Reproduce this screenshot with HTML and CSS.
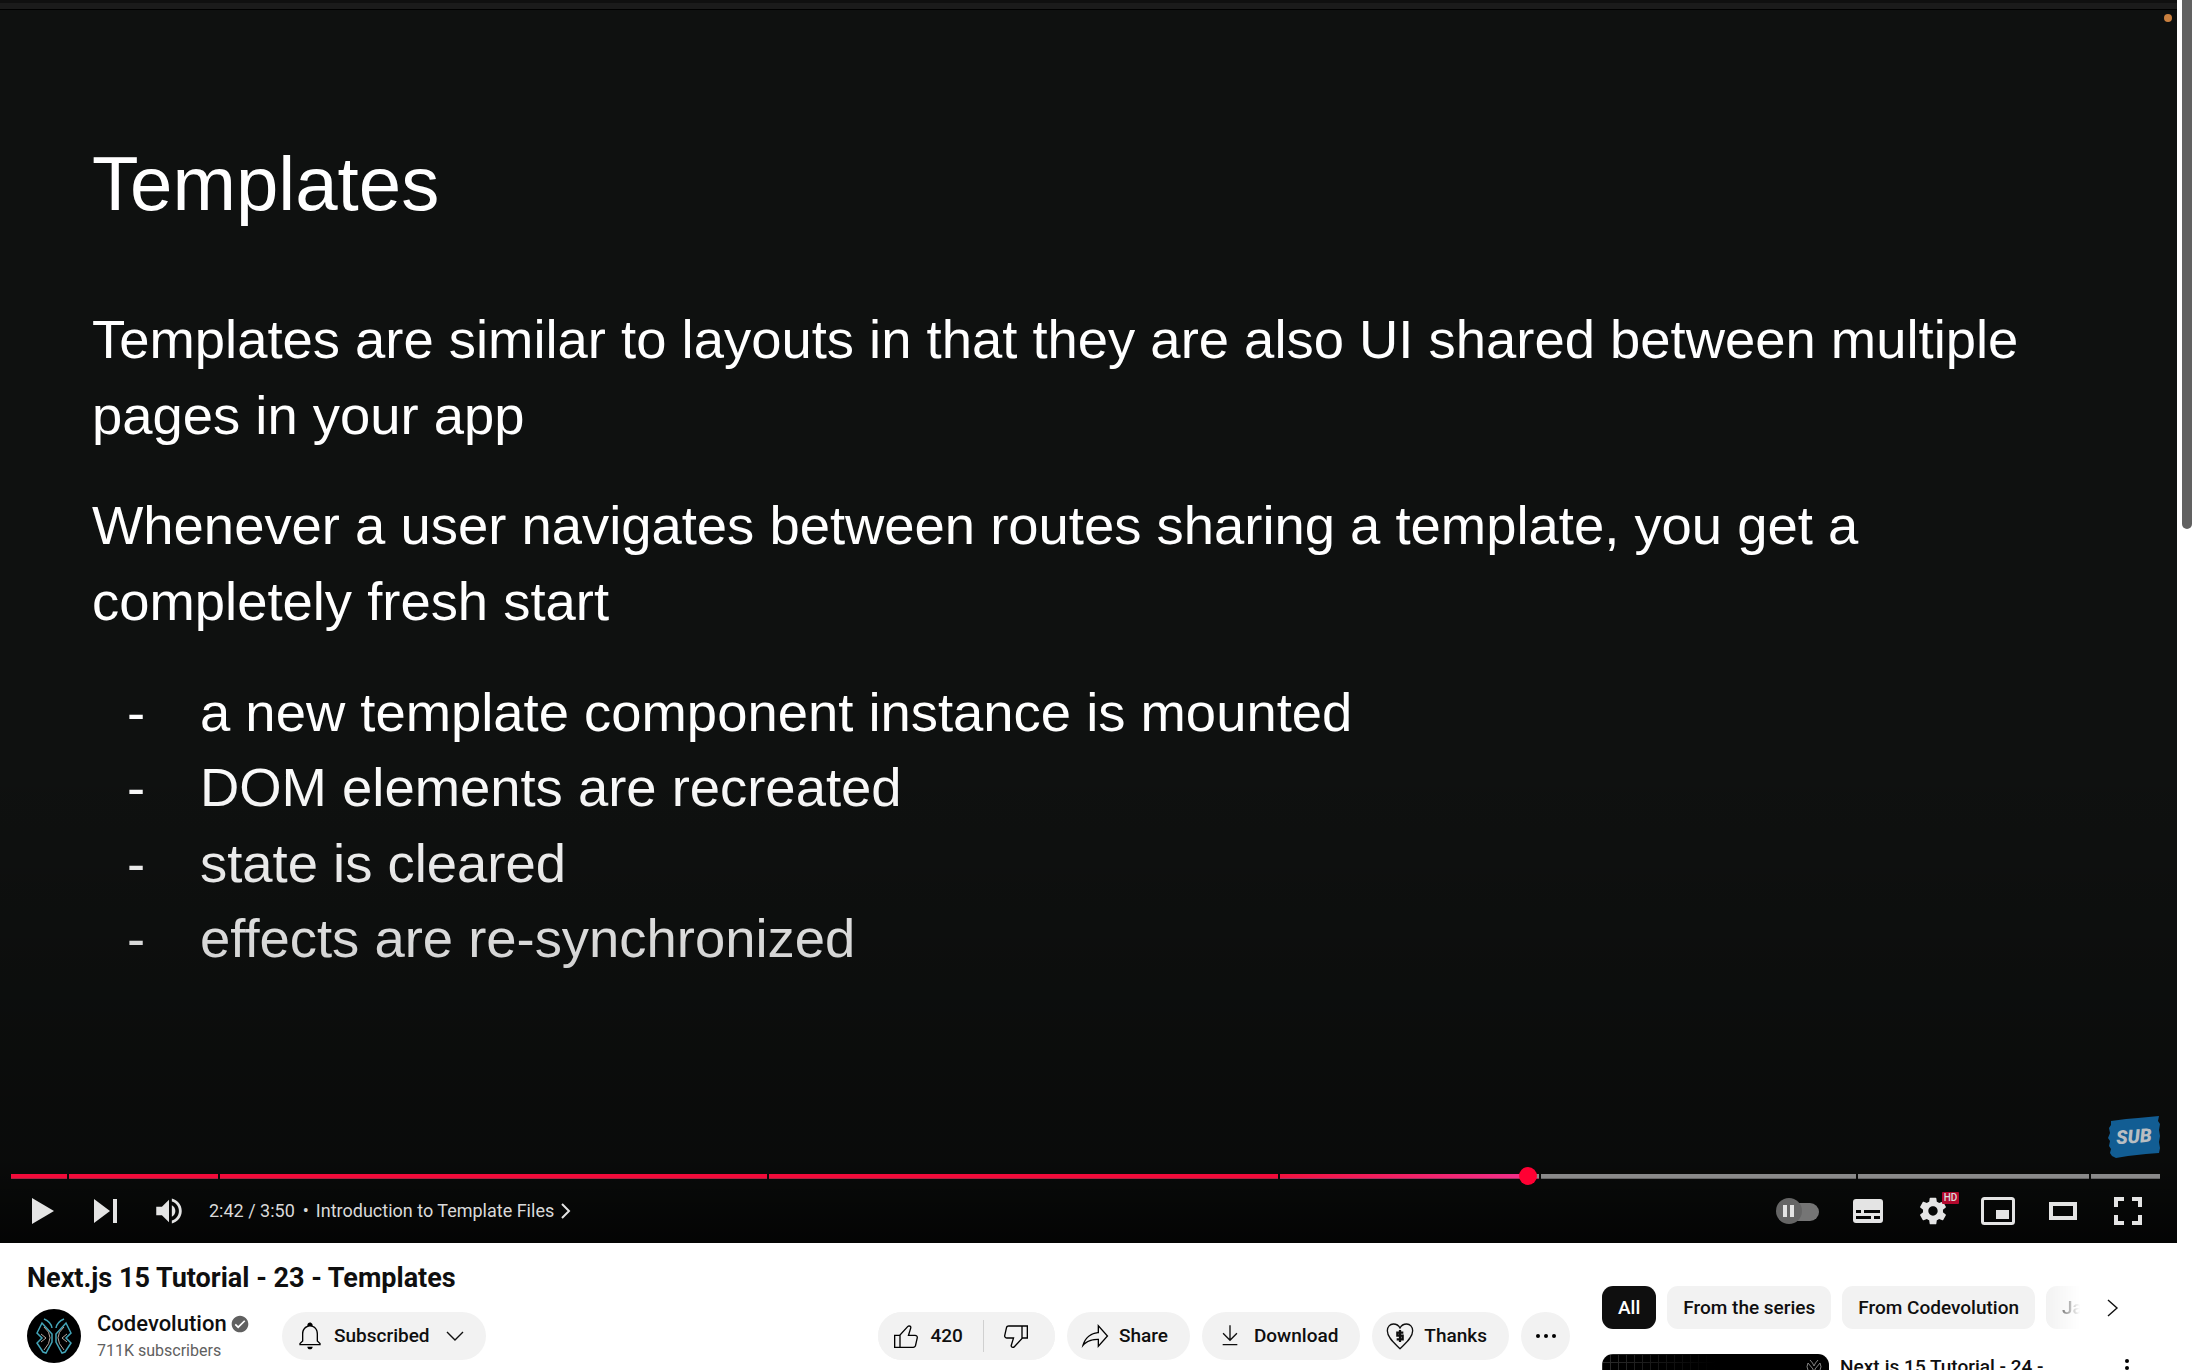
FILE: index.html
```html
<!DOCTYPE html>
<html lang="en">
<head>
<meta charset="utf-8">
<title>Next.js 15 Tutorial - 23 - Templates</title>
<link rel="stylesheet" href="styles.css">
</head>
<body>
<div class="app">
  <main class="page">
    <section class="player" aria-label="Video player">
      <div class="slide">
        <h2 class="slide-title">Templates</h2>
        <p>Templates are similar to layouts in that they are also UI shared between multiple<br>pages in your app</p>
        <p>Whenever a user navigates between routes sharing a template, you get a<br>completely fresh start</p>
        <ul>
          <li>a new template component instance is mounted</li>
          <li>DOM elements are recreated</li>
          <li>state is cleared</li>
          <li>effects are re-synchronized</li>
        </ul>
      </div>
      <span class="rec-dot"></span>
      <div class="shade"></div>
      <div class="controls">
        <button class="sub-badge" type="button">
          <svg viewBox="0 0 52 42" aria-hidden="true"><path d="M3 5 18 3 30 2 51 0 50 5 52 8 51 14 52 20 51 26 52 32 51 37 38 38 20 40 8 42 4 40 2 37 3 33 1 30 2 25 0 22 2 17 1 12 3 9Z" fill="#125d93"/></svg>
          <span>SUB</span>
        </button>
        <div class="timeline">
          <div class="segment played" style="flex-grow:56"></div>
          <div class="segment played" style="flex-grow:149"></div>
          <div class="segment played" style="flex-grow:546"></div>
          <div class="segment played" style="flex-grow:508"></div>
          <div class="segment current" style="flex-grow:259"></div>
          <div class="segment" style="flex-grow:314"></div>
          <div class="segment" style="flex-grow:231"></div>
          <div class="segment" style="flex-grow:69"></div>
          <input class="seek" type="range" min="0" max="2300" value="1628" aria-label="Seek">
        </div>
        <div class="bar">
          <button class="ctl" type="button" aria-label="Play"><svg width="22" height="26" viewBox="0 0 22 26"><path d="M0 0 22 13 0 26Z"/></svg></button>
          <button class="ctl" type="button" aria-label="Next"><svg width="24" height="24" viewBox="0 0 24 24"><path d="M0 0 16 12 0 24ZM19 0h4v24h-4Z"/></svg></button>
          <button class="ctl" type="button" aria-label="Mute"><svg width="34" height="34" viewBox="0 0 24 24"><path d="M3 9v6h4l5 5V4L7 9H3zm13.5 3c0-1.77-1.02-3.29-2.5-4.03v8.05c1.48-.73 2.5-2.25 2.5-4.02zM14 3.23v2.06c2.89.86 5 3.54 5 6.71s-2.11 5.85-5 6.71v2.06c4.01-.91 7-4.49 7-8.77s-2.99-7.86-7-8.77z"/></svg></button>
          <span class="time">2:42 / 3:50</span>
          <button class="chapter" type="button"><span>•</span><span>Introduction to Template Files</span><svg width="10" height="16" viewBox="0 0 10 16"><path d="M1 1 8 8 1 15" fill="none" stroke="#e4e4e4" stroke-width="2"/></svg></button>
          <span class="spacer"></span>
          <button class="ctl autoplay" type="button" aria-label="Autoplay"><svg width="44" height="26" viewBox="0 0 44 26"><rect x="12" y="5" width="31" height="18" rx="9" fill="#757575"/><circle cx="13" cy="13" r="13" fill="#656565"/><path d="M7 7h4v12H7ZM14 7h4v12h-4Z"/></svg></button>
          <button class="ctl wide" type="button" aria-label="Subtitles"><svg width="30" height="24" viewBox="0 0 30 24"><path fill-rule="evenodd" d="M3 0h24a3 3 0 0 1 3 3v18a3 3 0 0 1-3 3H3a3 3 0 0 1-3-3V3a3 3 0 0 1 3-3ZM3 11v3h5v-3ZM11 11v3h16v-3ZM3 17v3h15v-3ZM21 17v3h6v-3Z"/></svg></button>
          <button class="ctl wide settings" type="button" aria-label="Settings"><svg width="32" height="32" viewBox="0 0 24 24"><path d="M19.43 12.98c.04-.32.07-.64.07-.98s-.03-.66-.07-.98l2.11-1.65c.19-.15.24-.42.12-.64l-2-3.46c-.12-.22-.39-.3-.61-.22l-2.49 1c-.52-.4-1.08-.73-1.69-.98l-.38-2.65C14.46 2.18 14.25 2 14 2h-4c-.25 0-.46.18-.49.42l-.38 2.65c-.61.25-1.17.59-1.69.98l-2.49-1c-.23-.09-.49 0-.61.22l-2 3.46c-.13.22-.07.49.12.64l2.11 1.65c-.04.32-.07.65-.07.98s.03.66.07.98l-2.11 1.65c-.19.15-.24.42-.12.64l2 3.46c.12.22.39.3.61.22l2.49-1c.52.4 1.08.73 1.69.98l.38 2.65c.03.24.24.42.49.42h4c.25 0 .46-.18.49-.42l.38-2.65c.61-.25 1.17-.59 1.69-.98l2.49 1c.23.09.49 0 .61-.22l2-3.46c.12-.22.07-.49-.12-.64l-2.11-1.65zM12 15.5c-1.93 0-3.5-1.57-3.5-3.5s1.57-3.5 3.5-3.5 3.5 1.57 3.5 3.5-1.57 3.5-3.5 3.5z"/></svg><span class="hd">HD</span></button>
          <button class="ctl wide" type="button" aria-label="Miniplayer"><svg width="34" height="28" viewBox="0 0 34 28"><rect x="1.5" y="1.5" width="31" height="25" rx="2" fill="none" stroke="#e4e4e4" stroke-width="3"/><path d="M15 13h13v9H15Z"/></svg></button>
          <button class="ctl wide" type="button" aria-label="Theater mode"><svg width="28" height="18" viewBox="0 0 28 18"><path d="M2 2h24v14H2Z" fill="none" stroke="#e4e4e4" stroke-width="4"/></svg></button>
          <button class="ctl wide" type="button" aria-label="Full screen"><svg width="28" height="28" viewBox="0 0 28 28"><path d="M2 10V2h8M18 2h8v8M26 18v8h-8M10 26H2v-8" fill="none" stroke="#e4e4e4" stroke-width="4"/></svg></button>
        </div>
      </div>
    </section>

    <div class="columns">
      <section class="primary">
        <h1>Next.js 15 Tutorial - 23 - Templates</h1>
        <div class="meta">
          <a class="avatar" href="#" aria-label="Codevolution"><svg width="54" height="54" viewBox="0 0 54 54"><circle cx="27" cy="27" r="27" fill="#000"/><g fill="none" stroke="#43a5b8" stroke-width="1.5"><path d="M17 10q7 3 8 9M37 10q-7 3-8 9"/><path d="M15 14 10 24 15 29 10 34 16 43 19 44 25 33 25 25Z"/><path d="M39 14 44 24 39 29 44 34 38 43 35 44 29 33 29 25Z"/></g><path d="M17 18q12 10 0 23M14 25l5 4-5 4M37 18q-12 10 0 23M40 25l-5 4 5 4" fill="none" stroke="#b9a9a0"/></svg></a>
          <div class="owner">
            <a class="name" href="#">Codevolution <svg width="20" height="20" viewBox="0 0 24 24" fill="#606060"><path d="M12,2C6.5,2,2,6.5,2,12c0,5.5,4.5,10,10,10s10-4.5,10-10C22,6.5,17.5,2,12,2z M9.8,17.3l-4.2-4.1L7,11.8l2.8,2.7L17,7.4l1.4,1.4L9.8,17.3z"/></svg></a>
            <span class="subs">711K subscribers</span>
          </div>
          <button class="pill subscribed" type="button"><svg width="32" height="32" viewBox="0 0 24 24"><path d="M10,20h4c0,1.1-0.9,2-2,2S10,21.1,10,20z M20,17.35V19H4v-1.65l2-1.88v-5.15C6,7.4,7.56,5.1,10,4.34v-0.38c0-1.42,1.49-2.5,2.99-1.76C13.65,2.52,14,3.23,14,3.96l0,0.39c2.44,0.75,4,3.06,4,5.98v5.15L20,17.35z M19,17.77l-2-1.88v-5.47c0-2.47-1.19-4.36-3.13-5.1c-1.26-0.53-2.64-0.5-3.84,0.03C8.15,6.11,7,7.99,7,10.42v5.47l-2,1.88V18h14V17.77z"/></svg>Subscribed<svg class="caret" width="18" height="10" viewBox="0 0 18 10"><path d="M1 1 9 9 17 1" fill="none" stroke="#0f0f0f" stroke-width="1.4"/></svg></button>
          <span class="spacer"></span>
          <div class="actions">
            <div class="votes">
              <button class="pill like" type="button"><svg width="32" height="32" viewBox="0 0 24 24"><path d="M18.77,11h-4.23l1.52-4.94C16.38,5.03,15.54,4,14.38,4c-0.58,0-1.14,0.24-1.52,0.65L7,11H3v10h4h1h9.43c1.06,0,1.98-0.67,2.19-1.61l1.34-6C21.23,12.15,20.18,11,18.77,11z M7,20H4v-8h3V20z M19.98,13.17l-1.34,6C18.54,19.65,18.03,20,17.43,20H8v-8.61l5.6-6.06C13.79,5.12,14.08,5,14.38,5c0.26,0,0.5,0.11,0.63,0.3c0.07,0.1,0.15,0.26,0.09,0.47l-1.52,4.94L13.18,12h1.35h4.23c0.41,0,0.8,0.17,1.03,0.46C19.92,12.61,20.05,12.86,19.98,13.17z"/></svg>420</button>
              <button class="pill dislike" type="button" aria-label="Dislike"><svg width="32" height="32" viewBox="0 0 24 24"><path d="M17,4h-1H6.57C5.5,4,4.59,4.67,4.38,5.61l-1.34,6C2.77,12.85,3.82,14,5.23,14h4.23l-1.52,4.94C7.62,19.97,8.46,21,9.62,21c0.58,0,1.14-0.24,1.52-0.65L17,14h4V4H17z M10.4,19.67C10.21,19.88,9.92,20,9.62,20c-0.26,0-0.5-0.11-0.63-0.3c-0.07-0.1-0.15-0.26-0.09-0.47l1.52-4.94l0.4-1.29H9.46H5.23c-0.41,0-0.8-0.17-1.03-0.46c-0.12-0.15-0.25-0.4-0.18-0.72l1.34-6C5.46,5.35,5.97,5,6.57,5H16v8.61L10.4,19.67z M20,13h-3V5h3V13z"/></svg></button>
            </div>
            <button class="pill" type="button"><svg width="32" height="32" viewBox="0 0 24 24"><path d="M15,5.63L20.66,12L15,18.37V15v-1h-1c-3.96,0-7.14,1-9.75,3.09c1.84-4.07,5.11-6.4,9.89-7.1L15,9.86V9V5.63 M14,3v6C6.22,10.13,3.11,15.33,2,21c2.78-3.97,6.44-6,12-6v6l8-9L14,3L14,3z"/></svg>Share</button>
            <button class="pill" type="button"><svg width="32" height="32" viewBox="0 0 24 24"><path d="M6.500 18.500H17.500M6.800 10 12 15.200 17.200 10M12 15V4" fill="none" stroke="#0f0f0f"/></svg>Download</button>
            <button class="pill" type="button"><svg width="32" height="32" viewBox="0 0 24 24"><path d="M12 21.500C8.500 18 2.500 13.500 2.500 8 2.500 5 4.500 3 7 3c2 0 4 1 5 3 1-2 3-3 5-3 2.500 0 4.500 2 4.500 5 0 5.500-6 10-9.500 13.500Z" fill="none" stroke="#0f0f0f"/><path d="M14.500 9.500H10v2.300h4v2.800H9.500M12 7.500v9" fill="none" stroke="#0f0f0f" stroke-width="1.700"/></svg>Thanks</button>
            <button class="pill more" type="button" aria-label="More actions"><svg width="22" height="6" viewBox="0 0 22 6"><circle cx="3" cy="3" r="2"/><circle cx="11" cy="3" r="2"/><circle cx="19" cy="3" r="2"/></svg></button>
          </div>
        </div>
      </section>

      <aside class="secondary">
        <div class="chips">
          <button class="chip on" type="button">All</button>
          <button class="chip" type="button">From the series</button>
          <button class="chip" type="button">From Codevolution</button>
          <div class="chip-clip"><button class="chip" type="button">JavaScript</button></div>
          <button class="chip-next" type="button" aria-label="Next"><svg width="12" height="18" viewBox="0 0 12 18"><path d="M1 1 10 9 1 17" fill="none" stroke="#0f0f0f" stroke-width="1.400"/></svg></button>
        </div>
        <article class="related">
          <a class="thumb" href="#" aria-label="Next.js 15 Tutorial - 24"><svg width="18" height="24" viewBox="0 0 18 24"><path d="M5 0q3 3 4 6 1-3 4-6M3 3q-2 4 0 7l-2 3 4 7 3-6V9ZM15 3q2 4 0 7l2 3-4 7-3-6V9Z" fill="none" stroke="#858585"/></svg></a>
          <a class="related-title" href="#">Next.js 15 Tutorial - 24 -</a>
          <button class="menu" type="button" aria-label="Action menu"><svg width="6" height="20" viewBox="0 0 6 20"><circle cx="3" cy="3" r="2"/><circle cx="3" cy="10" r="2"/><circle cx="3" cy="17" r="2"/></svg></button>
        </article>
      </aside>
    </div>
  </main>
  <div class="scrollbar" aria-hidden="true"><div class="scroll-thumb"></div></div>
</div>
</body>
</html>
```
FILE: styles.css
```css
* { box-sizing: border-box; }

body {
  margin: 0;
  background: #fff;
  color: #0f0f0f;
  font-family: Roboto, Arial, sans-serif;
  font-size: 19px;
  line-height: 26px;
}

button {
  border: 0;
  margin: 0;
  padding: 0;
  background: none;
  color: inherit;
  font: inherit;
}

a { color: inherit; text-decoration: none; }
svg { display: block; flex: none; }
.spacer { flex: 1; }

.app { display: flex; height: 100vh; overflow: hidden; }
.page { flex: 1; min-width: 0; }

.scrollbar { width: 15px; padding-left: 5px; }
.scroll-thumb { height: 529px; background: #616161; border-radius: 5px; border-top-left-radius: 0; border-top-right-radius: 0; }

/* Player */
.player {
  position: relative;
  container-type: inline-size;
  aspect-ratio: 2177 / 1243;
  overflow: hidden;
  background: #0f1110;
  color: #fff;
}

/* The slide is part of the video frame, so its text scales with the player */
.slide {
  height: 100%;
  padding: 130px 92px 0;
  border-top: 10px solid #101010;
  border-image: linear-gradient(#101010 3px, #1b1b1b 3px, #1b1b1b 9px, #000 9px) 10 0 0 0;
  font-family: "Liberation Sans", Arial, sans-serif;
  font-size: 2.5cqw;
  line-height: 1.39;
}
.slide-title { margin: 0 0 74px; font-size: 3.5cqw; line-height: 88px; font-weight: 400; }
.slide p { margin: 0 0 35px; white-space: nowrap; }
.slide ul { margin: 0; padding: 0 0 0 35px; list-style: none; }
.slide li { display: flex; }
.slide li::before { content: "-"; width: 73px; }

.rec-dot {
  position: absolute;
  top: 14px;
  right: 5px;
  width: 8px;
  height: 8px;
  border-radius: 50%;
  background: #c9803f;
}

.shade {
  position: absolute;
  inset: 60% 0 0;
  background: linear-gradient(rgba(0, 0, 0, 0), rgba(0, 0, 0, .09) 25%, rgba(0, 0, 0, .15) 39%, rgba(0, 0, 0, .36) 83%, rgba(0, 0, 0, .75));
}

.controls { position: absolute; inset: auto 17px 0 11px; }

.sub-badge {
  display: grid;
  place-items: center;
  width: 52px;
  height: 42px;
  margin: 0 0 16px auto;
}
.sub-badge > * { grid-area: 1 / 1; }
.sub-badge span {
  color: #b9bec2;
  font-size: 19px;
  font-style: italic;
  font-weight: 900;
  transform: rotate(-4deg);
}

.timeline { position: relative; display: flex; gap: 2px; }
.segment { flex: 1 1 0; height: 5px; background: #8a8a8a; border-bottom: 1px solid #666; }
.played { background: #f30b3a; border-color: #a52341; }
.current { background: linear-gradient(90deg, #f3123f, #f3308c 96%, #8a8a8a 96%); border-color: #a03060; }
.seek {
  position: absolute;
  inset: -7px 0 auto;
  width: 100%;
  height: 18px;
  margin: 0;
  appearance: none;
  background: none;
}
.seek::-webkit-slider-thumb {
  appearance: none;
  width: 18px;
  height: 18px;
  border-radius: 50%;
  background: #ff0033;
}

.bar { display: flex; align-items: center; height: 64px; color: #dadada; font-size: 18px; }
.ctl { display: flex; flex: none; align-items: center; justify-content: center; width: 63px; height: 64px; fill: #e4e4e4; }
.wide { width: 65px; }
.autoplay { width: 74px; }
.time { margin-left: 9px; white-space: nowrap; }
.chapter { display: flex; align-items: center; gap: 7px; margin-left: 8px; white-space: nowrap; }
.settings { position: relative; }
.hd {
  position: absolute;
  top: 13px;
  right: 6px;
  width: 17px;
  border-radius: 1px;
  background: #b3082d;
  font-size: 10px;
  font-weight: 500;
  line-height: 12px;
  text-align: center;
}

/* Below the player */
.columns { display: flex; gap: 32px; padding-left: 27px; }
.primary { flex: 1; min-width: 0; padding-top: 16px; }
.primary h1 { margin: 0 0 12px; font-size: 27px; line-height: 38px; font-weight: 700; }
.meta { display: flex; align-items: center; }
.avatar { margin-right: 16px; }
.owner { display: flex; flex-direction: column; width: 185px; white-space: nowrap; }
.name { display: flex; align-items: center; gap: 3px; font-size: 22px; line-height: 30px; font-weight: 500; }
.subs { color: #606060; font-size: 16px; line-height: 24px; }

.pill {
  display: flex;
  align-items: center;
  gap: 8px;
  height: 48px;
  padding: 0 22px 0 12px;
  border-radius: 24px;
  background: #f2f2f2;
  font-weight: 500;
  white-space: nowrap;
}
.subscribed .caret { margin-left: 8px; }
.actions { display: flex; gap: 12px; }
.votes { display: flex; border-radius: 24px; background: #f2f2f2; }
.like { padding-right: 21px; position: relative; }
.like::after { content: ""; position: absolute; right: 0; top: 8px; width: 1px; height: 32px; background: #d0d0d0; }
.dislike { padding: 0 23px 0 16px; }
.more { width: 49px; padding: 0; justify-content: center; }

.secondary { width: 575px; padding-top: 43px; }
.chips { display: flex; align-items: center; gap: 11px; }
.chip { height: 43px; padding: 0 16px; border-radius: 11px; background: #f2f2f2; font-weight: 500; white-space: nowrap; }
.on { background: #0f0f0f; color: #fff; }
.chip-clip { width: 34px; overflow: hidden; -webkit-mask-image: linear-gradient(90deg, #000, transparent); mask-image: linear-gradient(90deg, #000, transparent); }
.chip-next { margin-left: 16px; }
.related { display: flex; align-items: flex-start; gap: 11px; padding-top: 25px; }
.thumb {
  display: flex;
  justify-content: flex-end;
  width: 227px;
  height: 128px;
  padding: 6px;
  border-radius: 11px;
  background:
    linear-gradient(90deg, transparent, #000 50%),
    repeating-linear-gradient(90deg, #2c2c2c 0 1px, transparent 1px 8px),
    repeating-linear-gradient(#2c2c2c 0 1px, #000 1px 8px);
}
.related-title { width: 273px; font-weight: 500; }
.menu { padding-top: 4px; }
```
